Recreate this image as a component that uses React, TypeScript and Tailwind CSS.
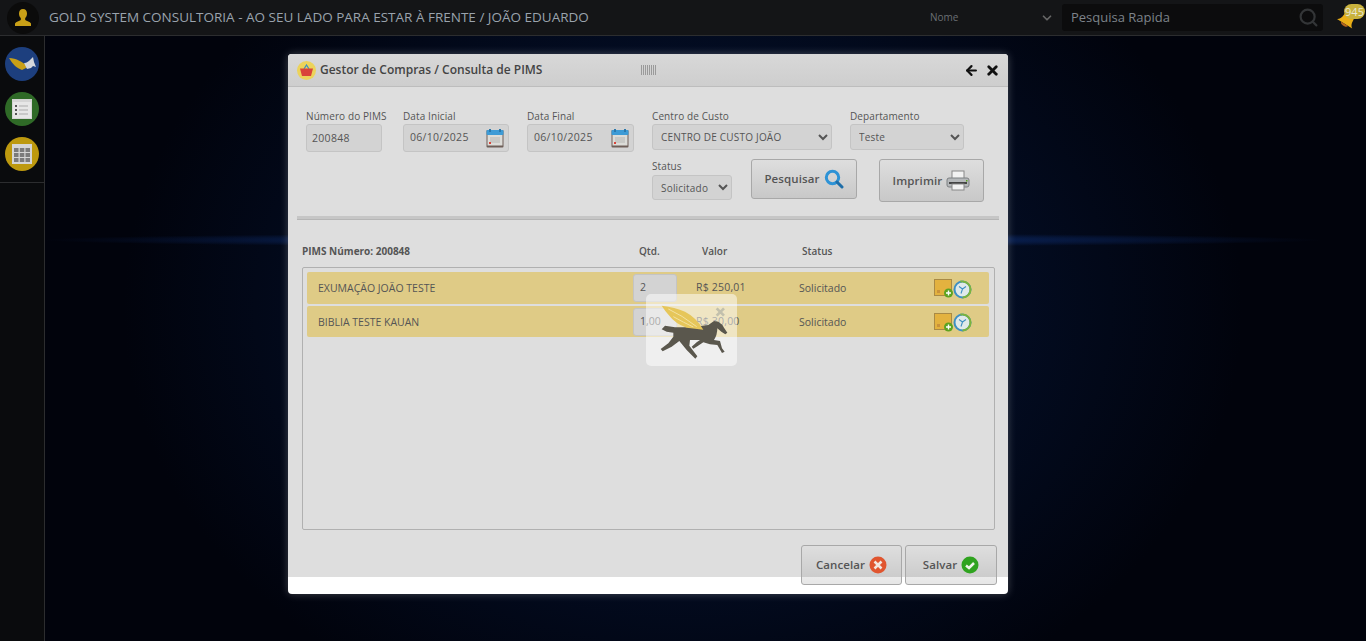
import { ChevronDown, Search, ArrowLeft, X } from 'lucide-react';

const font = "font-['Open_Sans',sans-serif]";

// Small calendar drawing used by both date inputs
const CalendarIcon = () => (
  <svg width="18" height="19" viewBox="0 0 18 19" className="shrink-0">
    <rect x="0.5" y="1" width="17" height="17.5" rx="1" fill="#6e5f58" />
    <rect x="1.5" y="6" width="15" height="10.5" fill="#dcdcd8" />
    <rect x="0.5" y="1" width="17" height="5" rx="1" fill="#3d9bd6" />
    <rect x="3" y="0" width="2" height="3" fill="#2b78ab" />
    <rect x="13" y="0" width="2" height="3" fill="#2b78ab" />
    <path d="M4 9h10M4 11h10M4 13h10" stroke="#b5b5b2" strokeWidth="1" />
    <rect x="3" y="13" width="2" height="2" fill="#d9443a" />
  </svg>
);

const Field = ({ label, children }: { label: string; children: React.ReactNode }) => (
  <div className="flex flex-col">
    <label className="text-[10px] tracking-[0.1px] leading-[14px] text-[#555] mb-px whitespace-nowrap">{label}</label>
    {children}
  </div>
);

const DateInput = ({ width }: { width: string }) => (
  <div className={`${width} h-[28px] flex items-center justify-between pl-[6px] pr-[4px] bg-[#d3d3d3] border border-[#c4c4c4] rounded-[3px]`}>
    <span className="text-[10.500px] tracking-[0.3px] text-[#555]">06/10/2025</span>
    <CalendarIcon />
  </div>
);

const RowIcons = () => (
  <div className="flex items-center pt-px">
    <svg width="19" height="19" viewBox="0 0 19 19">
      <rect x="0.5" y="0.5" width="17" height="16" fill="#e3b23f" stroke="#a98a45" />
      <rect x="3" y="11" width="3" height="3" fill="#c9923a" />
      <circle cx="14.5" cy="14" r="4.5" fill="#5ea321" />
      <path d="M14.5 11.5v5M12 14h5" stroke="#fff" strokeWidth="1.4" />
    </svg>
    <svg width="19" height="20" viewBox="0 0 19 20">
      <circle cx="9.500" cy="10.500" r="8" fill="#dfe9ea" stroke="#3d8fc4" strokeWidth="2" />
      <path d="M9.500 2.500a8 8 0 0 1 0 16" fill="none" stroke="#7cb53a" strokeWidth="2" />
      <path d="M7.500 1l3 1.500L7.500 4z" fill="#7cb53a" />
      <path d="M6 7.500l3.500 2.500 3.500-2.500M9.500 10l-1.500 4.500" fill="none" stroke="#3d8fc4" strokeWidth="1.100" />
    </svg>
  </div>
);

const ItemRow = ({ name, qty, value, height }: { name: string; qty: string; value: string; height: string }) => (
  <div className={`${height} flex items-center bg-[#dfcb86] rounded-[2px] text-[10.500px] text-[#555]`}>
    <span className="w-[326px] pl-[11px] pt-[2px]">{name}</span>
    <div className="w-[44px] h-[28px] flex items-center pl-[6px] bg-[#d3d3d3] border border-[#c4c4c4] rounded-[3px]">{qty}</div>
    <span className="w-[122px] pl-[19px] tracking-[0.2px]">{value}</span>
    <span className="w-[135px] pt-[2px]">Solicitado</span>
    <RowIcons />
  </div>
);

const ModalButton = ({ className, children }: { className: string; children: React.ReactNode }) => (
  <button className={`flex items-center justify-center gap-[4px] border border-[#a8a8a8] rounded-[3px] bg-gradient-to-b text-[11.500px] tracking-[0.1px] font-semibold text-[#555] ${className}`}>
    {children}
  </button>
);

export default function App() {
  return (
    <div className={`${font} h-[641px] w-[1366px] overflow-hidden flex flex-col bg-[#01030c] bg-[radial-gradient(ellipse_640px_7px_at_50%_240px,#0e2f75_0%,transparent_100%),radial-gradient(ellipse_560px_440px_at_50%_48%,#05183f_0%,#01030c_100%)]`}>
      {/* Top bar */}
      <header className="h-[36px] shrink-0 flex items-center bg-[#141517] border-b border-[#2c2d2f]">
        <div className="w-[32px] h-[32px] ml-[7px] rounded-full bg-[#0b0b0b] flex items-center justify-center">
          <svg width="18" height="19" viewBox="0 0 18 19">
            <path d="M9 1c2.600 0 4 2 4 4.500 0 2-.8 3.500-1.800 4.500v2c1.500 1 4.800 1.500 5.800 3.500V18H1v-2.500C2 13.500 5.300 13 6.800 12v-2C5.800 9 5 7.500 5 5.500 5 3 6.400 1 9 1z" fill="#c9a017" />
          </svg>
        </div>
        <h1 className="ml-[10px] text-[13.500px] text-[#9aa3ad] whitespace-nowrap w-[881px]">GOLD SYSTEM CONSULTORIA - AO SEU LADO PARA ESTAR À FRENTE / JOÃO EDUARDO</h1>
        <div className="w-[132px] flex items-center justify-between pr-[8px] text-[10px] text-[#6b6f74]">
          <span>Nome</span>
          <ChevronDown size={14} strokeWidth={3} className="text-[#666]" />
        </div>
        <div className="w-[261px] h-[27px] flex items-center justify-between pl-[9px] pr-[4px] rounded-[3px] bg-[#0c0c0d]">
          <span className="text-[13px] text-[#7d838a]">Pesquisa Rapida</span>
          <Search size={21} strokeWidth={2.500} className="text-[#333537]" />
        </div>
        <div className="relative ml-[13px] w-[30px] h-[30px]">
          <svg width="22" height="22" viewBox="0 0 22 22" className="absolute left-0 top-[6px]">
            <g transform="rotate(32 11 11)">
              <path d="M11 1c3.500 0 5.500 3 5.500 7.500 0 3.500 1.500 6 3.500 7H2c2-1 3.500-3.500 3.500-7C5.500 4 7.500 1 11 1z" fill="#e9ae17" />
              <path d="M7 15.500c0 3 8 3 8 0z" fill="#b5651d" />
            </g>
          </svg>
          <span className="absolute left-[8px] top-[1px] w-[21px] h-[15px] rounded-full bg-[#c9b23e] text-[11px] leading-[15px] text-center text-[#e8e8d8]">945</span>
        </div>
      </header>

      <div className="flex flex-1 min-h-0">
        {/* Side bar */}
        <aside className="w-[45px] shrink-0 bg-[#0a0b0d] border-r border-[#2c2d2f]">
          <div className="flex flex-col items-center gap-[11px] w-[44px] pt-[11px] pb-[11px] pr-[1px] border-b border-[#2c2d2f]">
            <div className="w-[34px] h-[34px] rounded-full bg-[#1d3f7e] flex items-center justify-center">
              <svg width="30" height="20" viewBox="0 0 30 20">
                <path d="M2 4c7 0 14 4 19 9l-6 3C9 14 5 9 2 4z" fill="#c9a017" />
                <path d="M17 9c3 0 5-2 7-4l2-2 1 5 2 5-3-1-2 2-4 1z" fill="#d5d8dc" />
              </svg>
            </div>
            <div className="w-[34px] h-[34px] rounded-full bg-[#2f6a27] flex items-center justify-center">
              <svg width="20" height="20" viewBox="0 0 20 20">
                <rect width="20" height="20" fill="#d5d5d5" />
                <rect x="1" y="3" width="18" height="16" fill="#e6e6e6" />
                <path d="M3 6h2v2H3zM3 10h2v2H3zM3 14h2v2H3z" fill="#555" />
                <path d="M7 7h9M7 11h9M7 15h9" stroke="#aaa" />
              </svg>
            </div>
            <div className="w-[34px] h-[34px] rounded-full bg-[#bd990f] flex items-center justify-center">
              <svg width="20" height="20" viewBox="0 0 20 20">
                <rect width="20" height="20" fill="#d5d5d5" />
                <path d="M2 4h4.500v4H2zM7.800 4h4.500v4H7.800zM13.500 4H18v4h-4.500zM2 9h4.500v4H2zM7.800 9h4.500v4H7.800zM13.500 9H18v4h-4.500zM2 14h4.500v4H2zM7.800 14h4.500v4H7.800zM13.500 14H18v4h-4.500z" fill="#7b7b7b" />
              </svg>
            </div>
          </div>
        </aside>

        {/* Modal window */}
        <main className="flex-1 pl-[243px] pt-[18px]">
          <div className="relative w-[720px] h-[540px] rounded-[4px] overflow-hidden bg-white shadow-[0_0_8px_rgba(255,255,255,0.25)]">
            <div className="h-[523px] bg-[#dedede]">
              <div className="h-[33px] flex items-center pl-[9px] pr-[8px] bg-gradient-to-b from-[#d8d8d8] to-[#cecece] border-b border-[#bdbdbd]">
                <div className="w-[19px] h-[19px] rounded-full bg-[#ecd35a] flex items-center justify-center">
                  <svg width="13" height="12" viewBox="0 0 13 12">
                    <path d="M4 5l2.500-4L9 5" fill="none" stroke="#3a8fc4" strokeWidth="1.200" />
                    <path d="M0 4.500h13L11 12H2z" fill="#d9443a" />
                  </svg>
                </div>
                <span className="ml-[4px] text-[12px] font-semibold text-[#444] w-[321px] whitespace-nowrap">Gestor de Compras / Consulta de PIMS</span>
                <div className="w-[15px] h-[10px] bg-[repeating-linear-gradient(90deg,#9a9a9a_0px,#9a9a9a_1px,transparent_1px,transparent_2px)]" />
                <div className="ml-auto flex items-center gap-[6px] text-[#111]">
                  <ArrowLeft size={15} strokeWidth={3.500} />
                  <X size={15} strokeWidth={4.500} />
                </div>
              </div>

              {/* Filters */}
              <div className="flex pl-[18px] pt-[22px] h-[129px]">
                <div className="w-[97px]">
                  <Field label="Número do PIMS">
                    <input readOnly value="200848" className="w-[76px] h-[28px] pl-[5px] text-[10.500px] tracking-[0.3px] text-[#555] bg-[#d3d3d3] border border-[#c4c4c4] rounded-[3px] outline-none" />
                  </Field>
                </div>
                <div className="w-[124px]">
                  <Field label="Data Inicial"><DateInput width="w-[106px]" /></Field>
                </div>
                <div className="w-[125px]">
                  <Field label="Data Final"><DateInput width="w-[107px]" /></Field>
                </div>
                <div className="w-[340px]">
                  <div className="flex">
                    <div className="w-[198px]">
                      <Field label="Centro de Custo">
                        <select className="w-[180px] h-[26px] pl-[4px] text-[10px] tracking-[0.2px] text-[#555] bg-[#d3d3d3] border border-[#c4c4c4] rounded-[3px] outline-none">
                          <option>CENTRO DE CUSTO JOÃO</option>
                        </select>
                      </Field>
                    </div>
                    <Field label="Departamento">
                      <select className="w-[114px] h-[26px] pl-[4px] text-[10px] tracking-[0.2px] text-[#555] bg-[#d3d3d3] border border-[#c4c4c4] rounded-[3px] outline-none">
                        <option>Teste</option>
                      </select>
                    </Field>
                  </div>
                  <div className="flex items-start mt-[9px]">
                    <div className="w-[99px]">
                      <Field label="Status">
                        <select className="w-[80px] h-[25px] mt-px pl-[4px] text-[10px] tracking-[0.2px] text-[#555] bg-[#d3d3d3] border border-[#c4c4c4] rounded-[3px] outline-none">
                          <option>Solicitado</option>
                        </select>
                      </Field>
                    </div>
                    <ModalButton className="w-[106px] h-[40px] from-[#dedede] to-[#c8c8c8]">
                      Pesquisar
                      <svg width="20" height="20" viewBox="0 0 20 20">
                        <circle cx="8.500" cy="8.500" r="6.200" fill="none" stroke="#2e93d6" strokeWidth="3" />
                        <path d="M13 13l5 5" stroke="#1f6ea8" strokeWidth="3" strokeLinecap="round" />
                      </svg>
                    </ModalButton>
                    <ModalButton className="w-[105px] h-[43px] ml-[22px] from-[#dedede] to-[#c8c8c8]">
                      Imprimir
                      <svg width="24" height="22" viewBox="0 0 24 22">
                        <rect x="6" y="1" width="12" height="8" fill="#f2f2f2" stroke="#888" />
                        <rect x="1" y="8" width="22" height="9" rx="2" fill="#b5b8ba" stroke="#7d8082" />
                        <rect x="3" y="12" width="18" height="2" fill="#444" />
                        <rect x="6" y="14" width="12" height="6" fill="#f2f2f2" stroke="#888" />
                        <rect x="20" y="10" width="1.500" height="1.500" fill="#5ea321" />
                      </svg>
                    </ModalButton>
                  </div>
                </div>
              </div>

              <div className="mx-[9px] h-[4px] bg-[#c6c6c6] border-b border-[#b5b5b5]" />

              {/* Items */}
              <div className="flex items-center h-[16px] mt-[23px] text-[10px] text-[#555]">
                <span className="w-[351px] pl-[14px] font-bold whitespace-nowrap">PIMS Número: 200848</span>
                <span className="w-[63px] font-semibold">Qtd.</span>
                <span className="w-[100px] font-semibold">Valor</span>
                <span className="font-semibold">Status</span>
              </div>
              <div className="mx-[14px] mt-[8px] w-[693px] h-[263px] border border-[#b0b0b0] rounded-[2px] pl-[4px] pr-[5px] pt-[4px] flex flex-col gap-[2px]">
                <ItemRow name="EXUMAÇÃO JOÃO TESTE" qty="2" value="R$ 250,01" height="h-[32px]" />
                <ItemRow name="BIBLIA TESTE KAUAN" qty="1,00" value="R$ 30,00" height="h-[31px]" />
              </div>

              <div className="flex justify-end gap-[3px] pr-[11px] mt-[15px]">
                <ModalButton className="relative w-[101px] h-[40px] from-black/0 to-black/10">
                  Cancelar
                  <svg width="18" height="18" viewBox="0 0 18 18">
                    <circle cx="9" cy="9" r="8.500" fill="#e0552f" />
                    <path d="M5.500 5.500l7 7M12.500 5.500l-7 7" stroke="#f3e6df" strokeWidth="2.500" />
                  </svg>
                </ModalButton>
                <ModalButton className="relative w-[92px] h-[40px] from-black/0 to-black/10">
                  Salvar
                  <svg width="18" height="18" viewBox="0 0 18 18">
                    <circle cx="9" cy="9" r="8.500" fill="#2fa31f" />
                    <path d="M5 9.500l3 2.500 5-5" fill="none" stroke="#eef5e8" strokeWidth="2.500" />
                  </svg>
                </ModalButton>
              </div>
            </div>

            {/* Loading overlay */}
            <div className="absolute left-[358px] top-[240px] w-[91px] h-[72px] rounded-[5px] bg-white/50">
              <svg width="91" height="72" viewBox="18 27 273 216">
                <path d="M222 108L235 110Q248 118 252 128L262 143L256 148L244 140L232 130Q232 150 222 165L240 168L246 190L254 200L246 204L232 180L210 178L190 172L172 184L160 191L155 185L170 172L180 165L150 165L148 182L172 214L166 221L140 195L118 168L95 185L68 199L62 192L85 175L100 155L100 143L80 140L65 133L75 122L105 127Q150 128 205 120Q212 115 222 108Z" fill="#5a574d" />
                <path d="M65 62Q105 66 135 80Q170 98 190 134L140 128Q105 115 88 92Q75 78 65 62Z" fill="#e6c65a" />
                <path d="M85 72Q125 90 170 125M100 95Q130 112 160 126" stroke="#f3e2a0" strokeWidth="3" fill="none" />
                <path d="M230 70l22 22M252 70l-22 22" stroke="#b8b8a8" strokeWidth="8" opacity="0.8" />
              </svg>
            </div>
          </div>
        </main>
      </div>
    </div>
  );
}
